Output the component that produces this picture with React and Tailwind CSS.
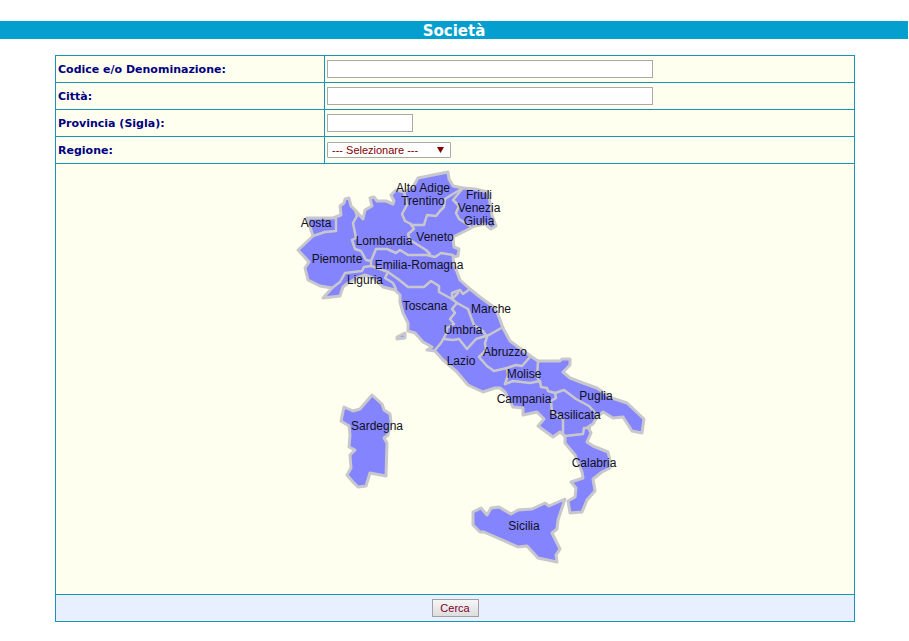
import { useState } from 'react';

const REGION_LABELS = [
  { name: 'Aosta', x: 316, y: 227 },
  { name: 'Piemonte', x: 337, y: 263 },
  { name: 'Lombardia', x: 384, y: 245 },
  { name: 'Trentino-Alto Adige', lines: ['Alto Adige', 'Trentino'], x: 423, y: 192 },
  { name: 'Friuli Venezia Giulia', lines: ['Friuli', 'Venezia', 'Giulia'], x: 479, y: 199 },
  { name: 'Veneto', x: 435, y: 241 },
  { name: 'Emilia-Romagna', x: 419, y: 269 },
  { name: 'Liguria', x: 365, y: 284 },
  { name: 'Toscana', x: 425, y: 310 },
  { name: 'Marche', x: 491, y: 313 },
  { name: 'Umbria', x: 463, y: 334 },
  { name: 'Lazio', x: 461, y: 365 },
  { name: 'Abruzzo', x: 505, y: 356 },
  { name: 'Molise', x: 524, y: 378 },
  { name: 'Campania', x: 524, y: 403 },
  { name: 'Puglia', x: 596, y: 400 },
  { name: 'Basilicata', x: 575, y: 419 },
  { name: 'Calabria', x: 594, y: 467 },
  { name: 'Sicilia', x: 524, y: 530 },
  { name: 'Sardegna', x: 377, y: 430 },
];

const LAND = [
  // mainland
  '307,218 333,218 341,215 340,206 344,203 345,199 349,198 351,206 355,210 363,219 365,210 372,206 370,198 374,197 377,201 386,201 393,204 394,201 391,195 396,190 404,192 413,187 418,178 433,175 448,172 449,179 453,186 463,188 475,189 488,192 490,202 492,215 496,226 491,229 485,224 475,226 453,237 454,247 459,249 458,256 453,257 454,265 457,272 460,280 470,289 480,297 495,308 499,317 503,328 510,341 532,357 538,361 560,361 562,359 570,359 570,365 563,372 570,378 583,383 597,388 612,398 627,403 644,419 642,433 632,431 623,417 613,418 603,412 597,417 593,424 588,427 591,433 587,442 593,446 608,452 610,460 610,468 602,472 593,479 595,491 587,500 582,512 570,513 568,501 575,497 576,488 571,482 583,478 582,472 575,455 565,443 565,436 560,432 553,437 538,426 544,419 537,412 523,415 523,408 513,407 509,400 505,392 500,388 495,388 483,392 468,385 457,372 443,360 435,351 427,350 432,347 423,342 415,333 408,331 408,323 403,313 400,302 400,295 395,290 383,287 373,278 365,275 357,278 348,283 343,287 340,296 323,298 332,288 320,286 308,280 305,268 309,262 298,250 313,236',
  // Sicilia
  '473,512 481,508 487,515 491,508 499,507 511,514 518,510 532,509 545,503 549,506 565,499 558,520 557,529 552,533 560,549 556,555 557,562 538,558 527,546 518,547 484,532 480,532 473,525',
  // Sardegna
  '344,407 353,411 360,409 372,395 382,404 384,410 390,414 391,422 388,435 384,438 387,443 386,476 370,473 366,486 358,487 353,482 347,475 351,468 350,455 355,450 349,447 350,435 349,426 341,421',
  // Elba
  '397,337 405,333 405,338 397,339',
];

const BORDERS = [
  // Aosta - Piemonte
  '313,236 325,232 336,231 336,219',
  // Piemonte - Lombardia
  '355,210 357,216 353,223 356,238 352,240 355,249 361,251 366,260 371,261',
  // Liguria - Piemonte - Emilia
  '332,288 340,282 345,273 362,271 364,267 371,266 380,269 388,272 385,278 393,283 396,289',
  '371,261 371,266',
  // Emilia north
  '371,261 376,249 387,249 396,253 400,250 408,255 427,255 435,257 441,253 453,255',
  // Lombardia - Trentino
  '404,192 407,205 402,214 405,221 411,224',
  // Lombardia - Veneto
  '411,224 414,229 408,234 410,240 426,250 430,254',
  // Trentino - Veneto
  '411,225 424,225 427,215 436,216 440,211 444,207 445,199 453,194 463,188',
  // Veneto - Friuli
  '463,188 453,200 459,206 456,213 459,219 470,226',
  // Emilia - Toscana
  '388,272 398,279 408,287 424,287 431,281 439,286 439,292 452,299 458,293',
  // Emilia - Marche
  '452,299 452,293 460,290 463,294 470,289',
  // Toscana - Umbria - Lazio
  '452,299 457,303 452,309 455,313 450,319 454,324 447,328 446,334 441,343 435,350',
  // Umbria - Marche
  '457,303 468,309 474,325 483,331 487,337',
  '444,339 453,340 459,339 467,349 476,339 489,335 503,327',
  // Lazio - Abruzzo
  '487,337 485,343 486,350 479,357 487,366 494,371 507,368 508,375 505,384',
  // Abruzzo - Molise
  '507,368 516,365 522,366 530,357',
  // Molise - Puglia
  '538,361 537,377 540,383',
  // Campania north
  '505,384 513,381 530,383 540,381 541,387 547,388 548,391 555,393',
  // Campania - Basilicata
  '555,393 556,398 551,401 552,412 563,419 563,432',
  // Basilicata - Puglia
  '555,393 564,390 576,399 589,406 597,415',
  // Basilicata - Calabria
  '565,436 583,434 584,428 590,428',
];

function ItalyMap({ onSelect }) {
  return (
    <svg
      className="h-[400px] w-[400px] cursor-pointer"
      viewBox="255 168 400 400"
      role="img"
      aria-label="Italia"
    >
      <g fill="#8484ff" stroke="#c8c8cc" strokeWidth="3" strokeLinejoin="round">
        {LAND.map(points => (
          <polygon key={points} points={points} />
        ))}
      </g>
      <g fill="none" stroke="#c8c8cc" strokeWidth="2.5" strokeLinejoin="round" strokeLinecap="round">
        {BORDERS.map(points => (
          <polyline key={points} points={points} />
        ))}
      </g>
      <g className="font-['Liberation_Sans',sans-serif] text-[12px]" fill="#101020" textAnchor="middle">
        {REGION_LABELS.map(({ name, lines = [name], x, y }) => (
          <text key={name} x={x} y={y} onClick={() => onSelect(name)}>
            {lines.map((line, idx) => (
              <tspan key={line} x={x} y={y + idx * 13}>
                {line}
              </tspan>
            ))}
          </text>
        ))}
      </g>
    </svg>
  );
}

function FormRow({ id, label, children }) {
  return (
    <div className="flex h-[27px] border-b border-[#1794b8]">
      <div className="flex w-[269px] shrink-0 items-center border-r border-[#1794b8] pt-0.5 pl-0.5">
        <label htmlFor={id} className="text-[11px] font-bold text-[#000080]">
          {label}
        </label>
      </div>
      <div className="flex flex-1 items-center px-0.5">{children}</div>
    </div>
  );
}

const INPUT = 'h-[18px] border border-[#a9a9a9] bg-white px-1 text-[11px] text-[#800000]';

export default function App() {
  const [regione, setRegione] = useState('');

  return (
    <div className="min-h-screen bg-white pt-[21px] font-['DejaVu_Sans',Verdana,sans-serif]">
      <h1 className="mr-px h-[18px] bg-[#049fcf] text-center text-[15px] leading-5 font-bold text-white">
        Società
      </h1>

      <form
        className="mt-4 mr-[54px] ml-[55px] border border-[#1794b8] bg-[#fffff0]"
        onSubmit={e => e.preventDefault()}
      >
        <FormRow id="codice" label="Codice e/o Denominazione:">
          <input id="codice" type="text" className={`${INPUT} w-[326px]`} />
        </FormRow>
        <FormRow id="citta" label="Città:">
          <input id="citta" type="text" className={`${INPUT} w-[326px]`} />
        </FormRow>
        <FormRow id="provincia" label="Provincia (Sigla):">
          <input id="provincia" type="text" maxLength={2} className={`${INPUT} w-[86px]`} />
        </FormRow>
        <FormRow id="regione" label="Regione:">
          <div className="relative flex">
            <select
              id="regione"
              value={regione}
              onChange={e => setRegione(e.target.value)}
              className="h-4 w-[124px] appearance-none rounded-[1px] border border-[#a9a9a9] bg-white pl-1 font-['Liberation_Sans',sans-serif] text-[11px] leading-[14px] text-[#800000]"
            >
              <option value="">--- Selezionare ---</option>
              {REGION_LABELS.map(({ name }) => (
                <option key={name} value={name}>
                  {name}
                </option>
              ))}
            </select>
            <svg
              className="pointer-events-none absolute top-[5px] right-[7px] h-1.5 w-[7px]"
              viewBox="0 0 7 6"
              fill="#800000"
            >
              <path d="M0 0h7L3.5 6z" />
            </svg>
          </div>
        </FormRow>

        {/* Map */}
        <div className="flex justify-center border-b border-[#1794b8] pt-1 pb-[26px]">
          <ItalyMap onSelect={setRegione} />
        </div>

        <div className="flex h-[26px] items-center justify-center bg-[#e8f0ff]">
          <button
            type="submit"
            className="h-[18px] w-[47px] border border-[#a0a0a0] bg-linear-to-b from-[#f6f6f6] to-[#dddddd] font-['Liberation_Sans',sans-serif] text-[11px] leading-4 text-[#800030]"
          >
            Cerca
          </button>
        </div>
      </form>
    </div>
  );
}
